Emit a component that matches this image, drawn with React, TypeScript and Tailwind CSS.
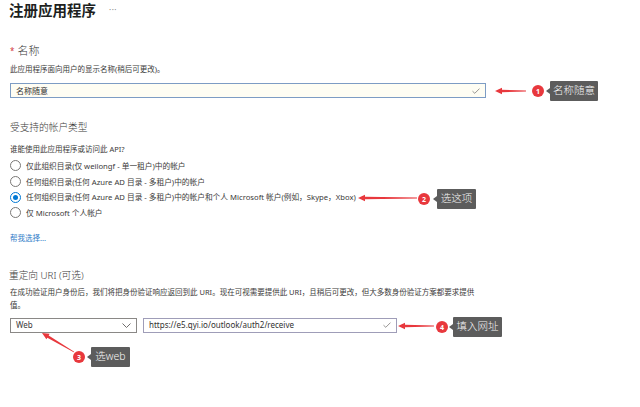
import { useState } from 'react'

const FONT = '"Noto Sans", "Noto Sans CJK SC", sans-serif'

const ACCOUNT_TYPES = [
  '仅此组织目录(仅 weilongf - 单一租户)中的帐户',
  '任何组织目录(任何 Azure AD 目录 - 多租户)中的帐户',
  '任何组织目录(任何 Azure AD 目录 - 多租户)中的帐户和个人 Microsoft 帐户(例如，Skype，Xbox)',
  '仅 Microsoft 个人帐户',
]

// red tapered arrow, drawn from tail (x1,y1) to head (x2,y2)
function Arrow({ x1, y1, x2, y2 }: { x1: number; y1: number; x2: number; y2: number }) {
  const dx = x2 - x1
  const dy = y2 - y1
  const len = Math.hypot(dx, dy)
  const ux = dx / len
  const uy = dy / len
  const nx = -uy
  const ny = ux
  const hb = { x: x2 - ux * 7, y: y2 - uy * 7 }
  const pts = [
    [x1 + nx * 0.4, y1 + ny * 0.4],
    [hb.x + nx * 1.3, hb.y + ny * 1.3],
    [hb.x + nx * 3.2, hb.y + ny * 3.2],
    [x2, y2],
    [hb.x - nx * 3.2, hb.y - ny * 3.2],
    [hb.x - nx * 1.3, hb.y - ny * 1.3],
    [x1 - nx * 0.4, y1 - ny * 0.4],
  ]
  return <polygon points={pts.map(p => p.join(',')).join(' ')} fill="#e8383d" />
}

function Badge({ n, x, y }: { n: number; x: number; y: number }) {
  return (
    <div className="absolute flex items-center justify-center rounded-full bg-[#e8383d] text-white font-bold text-[7px] leading-none w-[12px] h-[12px]"
      style={{ left: x - 6, top: y - 6 }}>
      {n}
    </div>
  )
}

function Tip({ text, x, y, w, h }: { text: string; x: number; y: number; w: number; h: number }) {
  return (
    <div className="absolute flex items-center justify-center bg-[#5c5c5c] text-[#f4f4f4] text-[10.5px] font-light rounded-[1px]"
      style={{ left: x, top: y, width: w, height: h }}>
      <span className="absolute left-[-4px] top-1/2 -translate-y-1/2 w-0 h-0 border-y-[3px] border-y-transparent border-r-[4px] border-r-[#5c5c5c]" />
      {text}
    </div>
  )
}

function Check() {
  return (
    <svg width="8" height="6" viewBox="0 0 8 6">
      <path d="M0.5 3.2 L2.8 5.3 L7.5 0.6" fill="none" stroke="#8a8886" strokeWidth="0.9" />
    </svg>
  )
}

export default function App() {
  const [name, setName] = useState('名称随意')
  const [account, setAccount] = useState(2)
  const [uri, setUri] = useState('https://e5.qyi.io/outlook/auth2/receive')

  return (
    <div className="relative w-[640px] h-[407px] overflow-hidden bg-white text-[#3b3a39]" style={{ fontFamily: FONT }}>
      <div className="pl-[9px]">
        {/* 标题 */}
        <div className="flex items-center h-[20px]">
          <h1 className="text-[14.5px] font-bold leading-[20px] text-[#201f1e]">注册应用程序</h1>
          <span className="ml-[13px] text-[8px] text-[#8a8886] tracking-[0.5px]">···</span>
        </div>

        {/* 名称 */}
        <div className="mt-[24px] h-[14px] flex items-center text-[11px] leading-[14px] pl-[1px]">
          <span className="text-[#d13438] text-[8px] mr-[3px]">*</span>
          <span className="font-light">名称</span>
        </div>
        <p className="mt-[6px] h-[10px] text-[7.5px] leading-[10px] pl-[1px]">此应用程序面向用户的显示名称(稍后可更改)。</p>
        <div className="mt-[9px] ml-[1px] w-[476px] h-[15px] flex items-center border border-[#7d9cc4] bg-[#fefdf3] px-[5px]">
          <input value={name} onChange={e => setName(e.target.value)}
            className="flex-1 bg-transparent outline-none text-[8px] text-[#323130]" />
          <Check />
        </div>

        {/* 受支持的帐户类型 */}
        <h2 className="mt-[23px] h-[14px] text-[9.7px] font-light leading-[14px] pl-[1px]">受支持的帐户类型</h2>
        <p className="mt-[9px] h-[10px] text-[7.5px] leading-[10px] pl-[1px]">谁能使用此应用程序或访问此 API?</p>
        <div className="mt-[4px] pl-[1px]">
          {ACCOUNT_TYPES.map((t, i) => (
            <label key={i} onClick={() => setAccount(i)} className="flex items-center h-[15.7px] cursor-pointer">
              <span className={`flex items-center justify-center w-[11px] h-[11px] rounded-full border ${account === i ? 'border-[#0078d4]' : 'border-[#7a7876]'}`}>
                {account === i && <span className="w-[5px] h-[5px] rounded-full bg-[#0078d4]" />}
              </span>
              <span className="ml-[5px] text-[7.7px] leading-[10px]">{t}</span>
            </label>
          ))}
        </div>
        <a className="block mt-[12px] h-[10px] text-[7.5px] leading-[10px] text-[#2f7cc8] pl-[1px]">帮我选择...</a>

        {/* 重定向 URI */}
        <h2 className="mt-[26px] h-[14px] text-[9.7px] font-light leading-[14px]">重定向 URI (可选)</h2>
        <p className="mt-[3.5px] w-[472px] text-[7.5px] leading-[13px] pl-[1px]">
          在成功验证用户身份后，我们将把身份验证响应返回到此 URI。现在可视需要提供此 URI，且稍后可更改，但大多数身份验证方案都要求提供值。
        </p>
        <div className="mt-[5.5px] ml-[1px] flex items-center gap-[6px]">
          <div className="w-[127px] h-[15px] flex items-center justify-between border border-[#8a8886] px-[5px] text-[8px]">
            <span>Web</span>
            <svg width="9" height="5" viewBox="0 0 9 5">
              <path d="M0.5 0.5 L4.5 4.5 L8.5 0.5" fill="none" stroke="#605e5c" strokeWidth="0.9" />
            </svg>
          </div>
          <div className="w-[254px] h-[15px] flex items-center border border-[#9f9db8] px-[5px]">
            <input value={uri} onChange={e => setUri(e.target.value)}
              className="flex-1 bg-transparent outline-none text-[8px] text-[#323130]" />
            <Check />
          </div>
        </div>
      </div>

      {/* 标注 */}
      <svg className="absolute left-0 top-0 pointer-events-none" width="640" height="407">
        <Arrow x1={526} y1={91} x2={495} y2={91} />
        <Arrow x1={417} y1={198} x2={358} y2={198} />
        <Arrow x1={74} y1={352} x2={42} y2={333} />
        <Arrow x1={434} y1={326} x2={398} y2={326} />
      </svg>
      <Badge n={1} x={538} y={91} />
      <Tip text="名称随意" x={550} y={81} w={48} h={20} />
      <Badge n={2} x={424} y={199} />
      <Tip text="选这项" x={437} y={189} w={39} h={20} />
      <Badge n={3} x={79} y={357} />
      <Tip text="选web" x={91} y={347} w={39} h={20} />
      <Badge n={4} x={442} y={327} />
      <Tip text="填入网址" x={453} y={317} w={49} h={20} />
    </div>
  )
}
